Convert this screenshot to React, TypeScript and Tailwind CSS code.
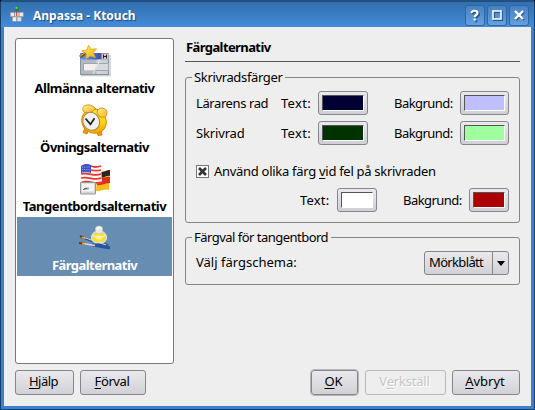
import React from "react";

function TitleIcon() {
  return (
    <svg width="16" height="18" viewBox="0 0 16 18" className="shrink-0">
      <g stroke="#888" strokeWidth=".5">
        <rect x="1.3" y="6.3" width="4.4" height="4.4" fill="#ece8e8" />
        <rect x="10" y="6.3" width="4.4" height="4.4" fill="#ece8e8" />
        <rect x="3.3" y="11" width="4.4" height="4.4" fill="#eee" />
        <rect x="8" y="11" width="4.4" height="4.4" fill="#ddd" />
        <rect x="5.6" y="6.3" width="4.4" height="4.4" fill="#e8d5d5" />
      </g>
      <path d="M7.7 4v6" stroke="#c22" strokeWidth=".9" />
      <rect x="6" y="0.8" width="3.8" height="4.2" rx="1" fill="#168c2a" />
      <rect x="6.5" y="1" width="2" height="1.8" fill="#5bdc68" />
    </svg>
  );
}

function WindowIcon() {
  return (
    <svg width="32" height="32" viewBox="0 0 32 32">
      <defs>
        <linearGradient id="bar" x2="1"><stop stopColor="#5da0f4" /><stop offset=".6" stopColor="#2c65cc" /><stop offset=".62" stopColor="#7774b4" /><stop offset="1" stopColor="#aaa6c6" /></linearGradient>
        <linearGradient id="star" x2="1" y2="1"><stop stopColor="#fff06a" /><stop offset="1" stopColor="#f4b010" /></linearGradient>
        <linearGradient id="pane" x2="1"><stop stopColor="#b4b9bf" /><stop offset=".55" stopColor="#b4bac0" /><stop offset=".6" stopColor="#d3d8dc" /><stop offset="1" stopColor="#c4cace" /></linearGradient>
      </defs>
      <path d="M2 30.5h29V10" fill="none" stroke="#ccc" strokeWidth="1.5" />
      <rect x="1.5" y="8.5" width="28" height="21" fill="url(#pane)" stroke="#8a949f" />
      <rect x="1" y="8" width="29" height="6.5" fill="url(#bar)" />
      <path d="M19 8h3v6h-4z" fill="#55529c" />
      <rect x="23" y="9" width="6" height="5" fill="#d9d9df" />
      <path d="M24.5 9.5v4M27.5 9.5v4M25 11.5h2" stroke="#222" strokeWidth="1.2" />
      <rect x="4.5" y="18.5" width="25" height="7" fill="#d6dade" stroke="#a0a6ac" />
      <path d="M5 19h13l-3 6.5H5z" fill="#f5efeb" />
      <path d="M21 15l-7 14" stroke="#e9eaec" />
      <path d="M1 12l7-5" stroke="#80501d" strokeWidth="3" />
      <path d="M1 11.3l7-5" stroke="#edb35d" strokeWidth="1" />
      <path d="M9.5.2l2.8 4.1 5.3-.5-3.3 4 2.1 4.8-5.2-1.7-4.2 3.1.2-5.4-4.500-2.800 5.300-1z" fill="url(#star)" stroke="#e8a21c" strokeWidth=".8" />
    </svg>
  );
}

function ClockIcon() {
  return (
    <svg width="32" height="32" viewBox="0 0 32 32">
      <defs>
        <linearGradient id="gold" x2="1" y2="1"><stop stopColor="#fff344" /><stop offset=".55" stopColor="#ffd20c" /><stop offset="1" stopColor="#e58d00" /></linearGradient>
        <linearGradient id="bell" x2="1" y2="1"><stop stopColor="#fff09a" /><stop offset="1" stopColor="#f9b41c" /></linearGradient>
      </defs>
      <path d="M6 24l-2 4.5 4 1.5 2-5zM18 27l1 4.5 4-.5-1-6z" fill="#efa105" stroke="#c96f08" strokeWidth=".8" />
      <path d="M15 5l4 2" stroke="#c77908" strokeWidth="3" />
      <ellipse cx="15" cy="17.3" rx="12.6" ry="11.6" transform="rotate(35 15 17.3)" fill="url(#gold)" stroke="#db8a06" />
      <path d="M4 7C2 0 12-1 16 4c1 3-9 7-12 3z" fill="url(#bell)" stroke="#d88b09" strokeWidth=".9" />
      <path d="M18 8c1-6 10-5 10 1 0 5-6 5-8 3z" fill="url(#bell)" stroke="#d88b09" strokeWidth=".9" />
      <ellipse cx="12.2" cy="17.3" rx="8.2" ry="9.2" transform="rotate(-28 12.2 17.3)" fill="#f0f0f0" stroke="#ad8c38" strokeWidth="1.1" />
      <path d="M6.5 14.5l5 5.8 4-6" fill="none" stroke="#222" strokeWidth="1.7" />
    </svg>
  );
}

function FlagsIcon() {
  return (
    <svg width="32" height="32" viewBox="0 0 32 32">
      <path d="M18 9c5 1 8-2 13-2l-1 20c-4-2-9 2-13 1z" fill="#f4bd20" />
      <path d="M22 9c4 0 6-2 9-2v6c-4-1-7 3-11 2z" fill="#292420" />
      <path d="M19 15c5 1 8-2 12-1v6c-5 0-8 3-13 2z" fill="#e12d20" />
      <path d="M2 3c7-5 12 2 20-1l1 17c-8 4-14-3-21 0z" fill="#faf7f6" />
      <g fill="none" stroke="#ee362e" strokeWidth="1.8"><path d="M12 3c4 2 7 1 10 0M12 7c4 1 7 1 10 0M2 11c8-2 13 3 20 0M2 15c8-2 13 3 20 0M3 19c8-2 13 3 20 0" /></g>
      <path d="M2 3c4-3 7-2 10-1v8c-4-1-7-1-10 0z" fill="#394fcb" />
      <path d="M3 4h8M3 6.5h8M3 9h8" stroke="#bfc6ff" strokeWidth=".8" strokeDasharray="1 1.2" />
      <path d="M1.500 19.500h15v11.500h-15z" fill="#d4d5d5" stroke="#999" />
      <path d="M3 20.5h12v8h-12z" fill="#f4f4f4" />
      <path d="M4 26.500h1.500v-1.500M6.500 26.500v-1.500h1.200v1.500M9 26.500v-2" fill="none" stroke="#444" strokeWidth=".8" />
    </svg>
  );
}

function PaintIcon() {
  return (
    <svg width="32" height="32" viewBox="0 0 32 32">
      <defs>
        <radialGradient id="ink"><stop stopColor="#fffca0" /><stop offset=".65" stopColor="#f8dc29" /><stop offset="1" stopColor="#ded9a2" /></radialGradient>
      </defs>
      <g transform="translate(0 4)">
        <ellipse cx="21" cy="18.500" rx="9" ry="2.5" fill="#456c90" />
        <path d="M5 12l24 8.500" stroke="#31517b" strokeWidth="2" />
        <path d="M5 11.500l22 7.500" stroke="#c5d7ed" />
        <path d="M15.500 6c-4 3-4 8 0 10.800h9c4-2.800 4-7.800 0-10.800z" fill="url(#ink)" stroke="#e9edea" />
        <path d="M14 9.500c3 2 9 2 12 0" fill="none" stroke="#fffbd5" />
        <path d="M16.500 2c1-2.500 6-2.500 7 0v4.500c-2 1.500-5 1.500-7 0z" fill="#e8e9df" stroke="#c4c8be" strokeWidth=".7" />
        <ellipse cx="20" cy="2" rx="2.800" ry="1.400" fill="#fbfbf4" />
        <path d="M14 19l17 3" stroke="#2354a6" strokeWidth="3" />
        <path d="M4 17.500l12 2" stroke="#d5dbe2" strokeWidth="1.600" />
        <path d="M1 10l4 2M0 17l5 .6" stroke="#6c3b17" strokeWidth="2" />
        <path d="M3 11.300l3 1M3 17.300l3 .4" stroke="#f6a52b" strokeWidth="1.700" />
      </g>
    </svg>
  );
}

function TitleButton({ children }: { children: React.ReactNode }) {
  return (
    <button className="flex h-[21px] w-[20px] items-center justify-center rounded-[3px] border border-[#2d66a4] bg-linear-to-b from-[#4781c3] to-[#66a0df]">
      <svg width="14" height="15" viewBox="0 0 14 15" fill="none">{children}</svg>
    </button>
  );
}

function Item({ icon, label, tracking, selected = false }: { icon: React.ReactNode; label: string; tracking: string; selected?: boolean }) {
  return (
    <div className={"flex h-[59px] flex-col items-center border border-dotted pt-[4px] text-[13px] font-bold leading-[16px] " + (selected ? "border-[#b08050] bg-[#678db2] text-white" : "border-transparent")}>
      {icon}
      <span className={"mt-[3px] whitespace-nowrap " + tracking}>{label}</span>
    </div>
  );
}

function ColorButton({ width, color }: { width: string; color: string }) {
  return (
    <button className={"flex h-[24px] shrink-0 rounded-[3px] border border-[#858689] bg-linear-to-b from-[#e9e9ee] to-[#cfcfd6] p-[3px] " + width}>
      <span className={"h-full w-full border border-t-[#555] border-r-white border-b-white border-l-[#555] " + color} />
    </button>
  );
}

function PushButton({ width, children }: { width: string; children: React.ReactNode }) {
  return (
    <button className={"h-[25px] shrink-0 rounded-[3px] border border-[#858689] bg-linear-to-b from-[#e9e9ed] to-[#d1d1d7] pr-[2px] pb-[2px] text-center leading-[21px] " + width}>
      {children}
    </button>
  );
}

function ColorRow({ label, textColor, background }: { label: React.ReactNode; textColor: string; background: string }) {
  return (
    <div className="flex h-[24px] items-center">
      <span className="w-[85px]">{label}</span>
      <span className="w-[37px] tracking-[0.3px]">Text:</span>
      <ColorButton width="w-[50px]" color={textColor} />
      <span className="ml-[26px] w-[66px] tracking-[-0.55px]">Bakgrund:</span>
      <ColorButton width="w-[49px]" color={background} />
    </div>
  );
}

const U = ({ children }: { children: React.ReactNode }) => <span className="underline underline-offset-2">{children}</span>;

export default function App() {
  return (
    <div className="h-[410px] w-[535px] bg-black">
      <div className="flex h-full w-full flex-col overflow-hidden rounded-t-[3px] border-r border-b border-l border-[#163f6c] bg-[#3b82cc] font-['Noto_Sans','Open_Sans',sans-serif] text-[13px] leading-[16px] text-black">
        <header className="flex h-[27px] shrink-0 items-center border-t-2 border-[#205181] bg-linear-to-b from-[#326fad] to-[#448cdb] pl-[8px] pr-[5px] pt-[1px]">
          <TitleIcon />
          <h1 className="ml-[8px] grow pt-px text-[12px] font-bold text-white [text-shadow:1px_1px_1px_#174c80]">Anpassa - Ktouch</h1>
          <div className="flex gap-[2px]">
            <TitleButton>
              <path d="M4 5.500c0-3 6-3 6 0 0 2-2.500 2-2.500 4M7.500 11.500v2" stroke="#21568f" strokeWidth="2.200" transform="translate(.8 .8)" />
              <path d="M3.500 5c0-3 6-3 6 0 0 2-2.800 2-2.800 4M6.700 10.500v2" stroke="white" strokeWidth="2.200" />
            </TitleButton>
            <TitleButton><path d="M4 4h8v8H4z" stroke="#21568f" strokeWidth="2" /><path d="M3 3h8v8H3z" stroke="white" strokeWidth="1.6" /></TitleButton>
            <TitleButton><path d="M4 4l8 8m0-8l-8 8" stroke="#21568f" strokeWidth="2.4" /><path d="M3 3l8 8m0-8l-8 8" stroke="white" strokeWidth="2.4" /></TitleButton>
          </div>
        </header>
        <main className="mx-[3px] mb-[3px] flex grow flex-col bg-[#eee] px-[11px] pt-[11px]">
          <div className="flex h-[326px] gap-[11px]">
            <nav className="w-[159px] shrink-0 rounded-[3px] border border-[#77787a] bg-white px-px pt-px">
              <Item icon={<WindowIcon />} label="Allmänna alternativ" tracking="tracking-[-0.5px]" />
              <Item icon={<ClockIcon />} label="Övningsalternativ" tracking="tracking-[-0.5px]" />
              <Item icon={<FlagsIcon />} label="Tangentbordsalternativ" tracking="tracking-[-0.45px]" />
              <Item icon={<PaintIcon />} label="Färgalternativ" tracking="tracking-[-0.55px]" selected />
            </nav>
            <section className="flex w-[335px] shrink-0 flex-col">
              <h2 className="h-[24px] border-b border-[#555] pl-px pt-[1px] text-[13px] font-bold tracking-[-0.6px]">Färgalternativ</h2>
              <fieldset className="mt-[7px] h-[154px] rounded-[3px] border border-[#858585] px-[10px]">
                <legend className="-ml-[4px] pr-[3px] pl-[2px] tracking-[-0.35px]">Skrivradsfärger</legend>
                <div className="mt-[6px] flex flex-col gap-[6px]">
                  <ColorRow label={<span className="tracking-[-0.4px]">Lärarens rad</span>} textColor="bg-[#000033]" background="bg-[#bfbfff]" />
                  <ColorRow label={<span className="tracking-[-0.15px]">Skrivrad</span>} textColor="bg-[#003300]" background="bg-[#9fff9f]" />
                </div>
                <label className="mt-[18px] flex h-[16px] items-center gap-[5px] whitespace-nowrap tracking-[-0.29px]">
                  <span className="flex h-[13px] w-[13px] items-center justify-center border border-[#777] bg-white">
                    <svg width="9" height="9" viewBox="0 0 9 9"><path d="M1 1l7 7m0-7L1 8" stroke="#333" strokeWidth="2.7" /></svg>
                  </span>
                  <span>Använd olika färg <U>v</U>id fel på skrivraden</span>
                </label>
                <div className="mt-[9px] flex h-[24px] items-center pl-[104px]">
                  <span className="w-[37px] tracking-[0.2px]">Text:</span>
                  <ColorButton width="w-[40px]" color="bg-white" />
                  <span className="ml-[26px] w-[66px] tracking-[-0.55px]">Bakgrund:</span>
                  <ColorButton width="w-[40px]" color="bg-[#ac0000]" />
                </div>
              </fieldset>
              <fieldset className="mt-[6px] h-[56px] rounded-[3px] border border-[#858585] px-[10px]">
                <legend className="-ml-[4px] pr-[3px] pl-[2px] tracking-[-0.52px]">Färgval för tangentbord</legend>
                <div className="mt-[6px] flex h-[24px] items-center justify-between">
                  <span className="-mt-[2px] tracking-[0px]">Välj färgschema:</span>
                  <button className="flex h-[24px] w-[85px] rounded-[3px] border border-[#858689] bg-linear-to-b from-[#e9e9ed] to-[#d1d1d7]">
                    <span className="w-[67px] pl-[4px] text-left leading-[21px] tracking-[-0.65px]">Mörkblått</span>
                    <span className="flex h-full grow items-center justify-center border-l border-[#858689]">
                      <svg width="8" height="5" viewBox="0 0 8 5"><path d="M0 0h8L4 5z" fill="black" /></svg>
                    </span>
                  </button>
                </div>
              </fieldset>
            </section>
          </div>
          <footer className="mt-[6px] flex">
            <PushButton width="w-[59px] tracking-[-0.5px]"><U>H</U>jälp</PushButton>
            <div className="w-[6px]" />
            <PushButton width="w-[66px] tracking-[-0.4px]"><U>F</U>örval</PushButton>
            <div className="grow" />
            <PushButton width="w-[47px] outline outline-[#b7b7b7]"><U>O</U>K</PushButton>
            <button disabled className="ml-[7px] h-[25px] w-[81px] rounded-[3px] border border-[#b9b9b9] pr-[2px] pb-[2px] leading-[21px] tracking-[-0.2px] text-[#c6c6c6] [text-shadow:1px_1px_0_white]">V<U>e</U>rkställ</button>
            <div className="w-[6px]" />
            <PushButton width="w-[68px]"><U>A</U>vbryt</PushButton>
          </footer>
        </main>
      </div>
    </div>
  );
}
